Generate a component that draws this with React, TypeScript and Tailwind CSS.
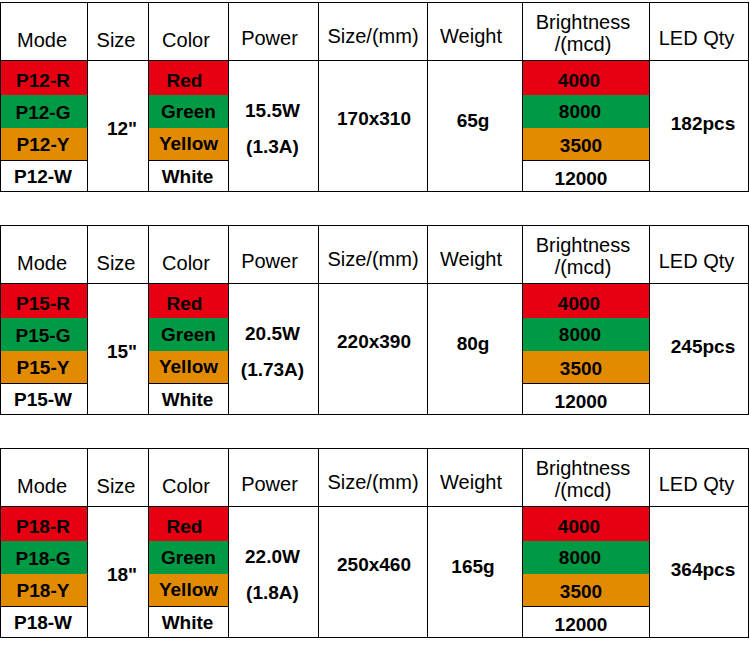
import React from "react";

type T = {
  p: string;
  size: string;
  w: string;
  a: string;
  mm: string;
  g: string;
  qty: string;
};

const tables: T[] = [
  { p: "P12", size: '12"', w: "15.5W", a: "(1.3A)", mm: "170x310", g: "65g", qty: "182pcs" },
  { p: "P15", size: '15"', w: "20.5W", a: "(1.73A)", mm: "220x390", g: "80g", qty: "245pcs" },
  { p: "P18", size: '18"', w: "22.0W", a: "(1.8A)", mm: "250x460", g: "165g", qty: "364pcs" },
];

const cell = "border-r border-b border-black flex items-center justify-center text-[19px] font-bold leading-none";
const head = "border-r border-b border-black flex items-end justify-center text-[20px] leading-none";
const red = "bg-[#e60012] border-b-transparent";
const green = "bg-[#009a44] border-b-transparent";
const yellow = "bg-[#e38b00]";

function Table({ t }: { t: T }) {
  return (
    <div className="grid w-[749px] grid-cols-[87px_61px_80px_90px_109px_95px_127px_99px] grid-rows-[58px_34px_33px_33px_31px] border-l border-t border-black text-black">
      <div className={`${head} pb-[10px] pr-[4px]`}>Mode</div>
      <div className={`${head} pb-[10px] pr-[4px]`}>Size</div>
      <div className={`${head} pb-[10px] pr-[5px]`}>Color</div>
      <div className={`${head} pb-[12px] pr-[8px]`}>Power</div>
      <div className={`${head} pb-[14px]`}>Size/(mm)</div>
      <div className={`${head} pb-[14px] pr-[8px]`}>Weight</div>
      <div className="border-r border-b border-black flex flex-col justify-end items-center text-center text-[20px] pb-[5px] pr-[6px]">
        <span className="block leading-[22px]">Brightness</span>
        <span className="block leading-[22px]">/(mcd)</span>
      </div>
      <div className={`${head} pb-[12px] pr-[5px]`}>LED Qty</div>

      <div className={`${cell} ${red} pt-[5px] pr-[2px]`}>{t.p}-R</div>
      <div className={`${cell} row-span-4 pt-[4px] pl-[8px]`}>{t.size}</div>
      <div className={`${cell} ${red} pt-[5px] pr-[8px]`}>Red</div>
      <div className="border-r border-b border-black row-span-4 flex flex-col items-center justify-center text-[19px] font-bold pt-[6px] pr-[2px]">
        <span className="block leading-[36px]">{t.w}</span>
        <span className="block leading-[36px]">{t.a}</span>
      </div>
      <div className={`${cell} row-span-4 pb-[16px] pl-[2px]`}>{t.mm}</div>
      <div className={`${cell} row-span-4 pb-[12px] pr-[4px]`}>{t.g}</div>
      <div className={`${cell} ${red} pt-[5px] pr-[14px]`}>4000</div>
      <div className={`${cell} row-span-4 pb-[6px] pl-[8px]`}>{t.qty}</div>

      <div className={`${cell} ${green} pt-[2px] pr-[2px]`}>{t.p}-G</div>
      <div className={`${cell} ${green} pt-[1px]`}>Green</div>
      <div className={`${cell} ${green} pr-[12px]`}>8000</div>

      <div className={`${cell} ${yellow} pr-[2px]`}>{t.p}-Y</div>
      <div className={`${cell} ${yellow} pb-[2px]`}>Yellow</div>
      <div className={`${cell} ${yellow} pt-[3px] pr-[10px]`}>3500</div>

      <div className={`${cell} pt-[1px] pr-[2px]`}>{t.p}-W</div>
      <div className={`${cell} pr-[2px]`}>White</div>
      <div className={`${cell} pt-[4px] pr-[10px]`}>12000</div>
    </div>
  );
}

export default function App() {
  return (
    <div className="w-[750px] h-[647px] bg-white pt-[2px] font-['Liberation_Sans',Arial,sans-serif] flex flex-col gap-[33px]">
      {tables.map((t) => (
        <Table key={t.p} t={t} />
      ))}
    </div>
  );
}
